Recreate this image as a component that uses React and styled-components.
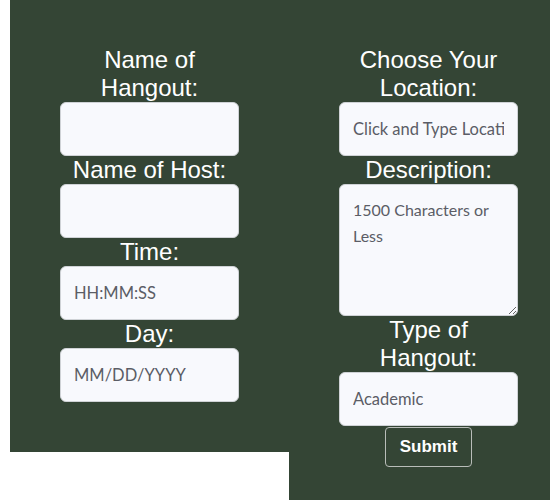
import React from 'react';
import styled, { createGlobalStyle } from 'styled-components';

const GlobalStyle = createGlobalStyle`
  html, body {
    margin: 0;
    padding: 0;
    overflow: hidden;
    background: #ffffff;
  }
`;

const Page = styled.div`
  display: flex;
  align-items: flex-start;
  padding-left: 10px;
  width: 600px;
`;

const Column = styled.form`
  box-sizing: border-box;
  width: 279px;
  flex-shrink: 0;
  background-color: #344535;
  padding: 46px 0 50px;
  display: flex;
  flex-direction: column;
  align-items: center;
  min-height: ${props => props.minHeight || 0}px;
`;

const Label = styled.label`
  display: block;
  max-width: 179px;
  text-align: center;
  color: #ffffff;
  font-family: "Liberation Sans", Arial, sans-serif;
  font-size: 24px;
  line-height: 28px;
`;

const Field = styled.input`
  box-sizing: border-box;
  width: 179px;
  height: 54px;
  margin: 0;
  padding: 0 13px;
  border: 1px solid #cfd2d6;
  border-radius: 6px;
  background-color: #f8f9fd;
  font-family: "Lato", "Liberation Sans", sans-serif;
  font-size: 16.5px;
  color: #333;
  outline: none;

  &::placeholder {
    color: #5b5d66;
    opacity: 1;
  }
`;

const Area = styled.textarea`
  box-sizing: border-box;
  width: 179px;
  height: 132px;
  margin: 0;
  padding: 12px 13px;
  border: 1px solid #cfd2d6;
  border-radius: 6px;
  background-color: #f8f9fd;
  font-family: "Lato", "Liberation Sans", sans-serif;
  font-size: 16px;
  line-height: 26px;
  color: #333;
  outline: none;
  display: block;

  &::placeholder {
    color: #5b5d66;
    opacity: 1;
  }
`;

const SubmitButton = styled.button`
  margin-top: 1px;
  width: 87px;
  height: 40px;
  background: transparent;
  border: 1px solid #b9bdb9;
  border-radius: 4px;
  color: #ffffff;
  font-family: "Liberation Sans", Arial, sans-serif;
  font-size: 17px;
  font-weight: 700;
  cursor: pointer;
`;

export default function App() {
  return (
    <>
      <GlobalStyle />
      <Page>
        <Column>
          <Label>Name of Hangout:</Label>
          <Field type="text" />
          <Label>Name of Host:</Label>
          <Field type="text" />
          <Label>Time:</Label>
          <Field type="text" placeholder="HH:MM:SS" />
          <Label>Day:</Label>
          <Field type="text" placeholder="MM/DD/YYYY" />
        </Column>
        <Column minHeight={520}>
          <Label>Choose Your Location:</Label>
          <Field type="text" placeholder="Click and Type Location" />
          <Label>Description:</Label>
          <Area placeholder="1500 Characters or Less" />
          <Label>Type of Hangout:</Label>
          <Field type="text" placeholder="Academic" />
          <SubmitButton type="submit">Submit</SubmitButton>
        </Column>
      </Page>
    </>
  );
}
